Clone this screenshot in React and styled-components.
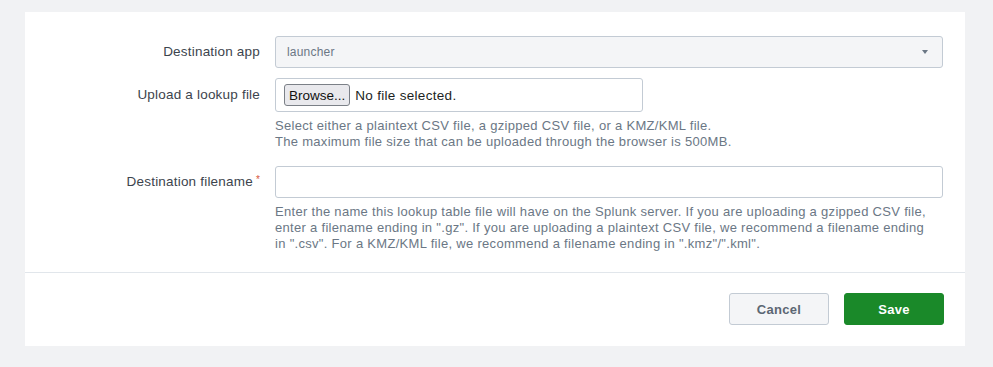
import styled, { createGlobalStyle } from "styled-components"

const Global = createGlobalStyle`
    body {
        margin: 0;
        background: #f1f2f4;
        font-family: "Liberation Sans", Arial, sans-serif;
    }
`

const Page = styled.div`
    padding: 12px 28px 22px 25px;
`

const Card = styled.div`
    background: #ffffff;
    width: 940px;
`

const Body = styled.div`
    padding: 24px 22px 20px 0;
`

const Row = styled.div`
    display: grid;
    grid-template-columns: 235px 1fr;
    column-gap: 15px;
    margin-bottom: ${props => props.gap ?? 10}px;
`

const Label = styled.label`
    text-align: right;
    font-size: 13.5px;
    letter-spacing: 0.2px;
    color: #3c444d;
    line-height: ${props => props.h || 32}px;
`

const Required = styled.span`
    color: #d6563c;
    font-size: 10px;
    margin-left: 3px;
    vertical-align: top;
    position: relative;
    top: -2px;
`

const Select = styled.div`
    height: 32px;
    box-sizing: border-box;
    border: 1px solid #c3cbd4;
    border-radius: 3px;
    background: #f4f5f7;
    display: flex;
    align-items: center;
    justify-content: space-between;
    padding: 0 14px 0 11px;
    font-size: 12px;
    letter-spacing: 0.2px;
    color: #6b7785;
`

const Caret = styled.span`
    width: 0;
    height: 0;
    border-left: 3.5px solid transparent;
    border-right: 3.5px solid transparent;
    border-top: 4px solid #6b7785;
`

const FileBox = styled.div`
    width: 368px;
    height: 34px;
    box-sizing: border-box;
    border: 1px solid #c3cbd4;
    border-radius: 3px;
    background: #ffffff;
    display: flex;
    align-items: center;
    padding-left: 8px;
    gap: 5px;
    font-size: 13.5px;
    letter-spacing: 0.3px;
    color: #1b1f23;
`

const Browse = styled.span`
    height: 22px;
    box-sizing: border-box;
    border: 1px solid #7b8087;
    border-radius: 3px;
    background: #e9e9ed;
    padding: 0 4px;
    display: flex;
    align-items: center;
    font-size: 13.5px;
    letter-spacing: 0;
    color: #111;
`

const TextInput = styled.input`
    width: 100%;
    height: 32px;
    box-sizing: border-box;
    border: 1px solid #c3cbd4;
    border-radius: 3px;
    background: #ffffff;
    outline: none;
    display: block;
`

const Help = styled.p`
    margin: 6px 0 0;
    font-size: 13px;
    letter-spacing: 0.3px;
    line-height: 16px;
    color: #6b7785;
    white-space: nowrap;
`

const Footer = styled.div`
    border-top: 1px solid #e1e6eb;
    display: flex;
    justify-content: flex-end;
    gap: 15px;
    padding: 20px 21px 21px;
`

const Button = styled.button`
    width: 100px;
    height: 32px;
    border-radius: 3px;
    font-family: "Liberation Sans", Arial, sans-serif;
    font-size: 13px;
    font-weight: 700;
    letter-spacing: 0.3px;
    border: 1px solid ${props => props.primary ? "#1a8929" : "#c3cbd4"};
    background: ${props => props.primary ? "#1a8929" : "#f4f5f7"};
    color: ${props => props.primary ? "#ffffff" : "#5c6773"};
`

function App() {
    return (
        <Page>
            <Global />
            <Card>
                <Body>
                    <Row>
                        <Label>Destination app</Label>
                        <Select>
                            launcher
                            <Caret />
                        </Select>
                    </Row>
                    <Row gap={16}>
                        <Label h={34}>Upload a lookup file</Label>
                        <div>
                            <FileBox>
                                <Browse>Browse...</Browse>
                                No file selected.
                            </FileBox>
                            <Help>
                                Select either a plaintext CSV file, a gzipped CSV file, or a KMZ/KML file.<br />
                                The maximum file size that can be uploaded through the browser is 500MB.
                            </Help>
                        </div>
                    </Row>
                    <Row gap={0}>
                        <Label>Destination filename<Required>*</Required></Label>
                        <div>
                            <TextInput />
                            <Help>
                                Enter the name this lookup table file will have on the Splunk server. If you are uploading a gzipped CSV file,<br />
                                enter a filename ending in ".gz". If you are uploading a plaintext CSV file, we recommend a filename ending<br />
                                in ".csv". For a KMZ/KML file, we recommend a filename ending in ".kmz"/".kml".
                            </Help>
                        </div>
                    </Row>
                </Body>
                <Footer>
                    <Button>Cancel</Button>
                    <Button primary>Save</Button>
                </Footer>
            </Card>
        </Page>
    )
}

export default App
